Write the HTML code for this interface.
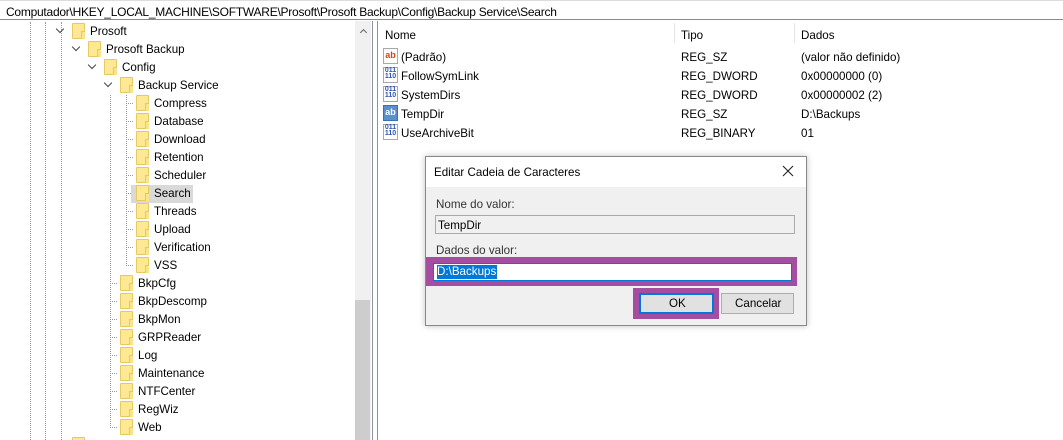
<!DOCTYPE html>
<html><head><meta charset="utf-8"><style>
*{margin:0;padding:0;box-sizing:border-box}
html,body{width:1063px;height:440px;overflow:hidden}
body{background:#fff;font-family:"Liberation Sans",sans-serif;font-size:11.6px;color:#000;position:relative}
.a{position:absolute}
.t{position:absolute;white-space:nowrap;line-height:14px;margin-top:1px}
.f{position:absolute;width:13px;height:16px;background:#fde993;border:1px solid #e8c862;border-radius:1px}
.f:after{content:"";position:absolute;right:-1px;bottom:-1px;width:3px;height:7px;border-left:1px solid #e8c862;border-top:1px solid #e8c862;background:#fbe38a}
.v{position:absolute;border-left:1px dotted #9a9a9a;width:0}
.h{position:absolute;border-top:1px dotted #9a9a9a;height:0}
.ch{position:absolute;width:6px;height:6px;border-right:1.5px solid #444;border-bottom:1.5px solid #444;transform:rotate(45deg)}
.ic{position:absolute;width:15px;height:16px;border:1px solid #a8a8a8;background:#fff;font-size:9px;font-weight:bold;line-height:12px;text-align:center}
</style></head><body>
<div class="a" style="left:0;top:0;width:1063px;height:20px;border-bottom:1px solid #8a8a8a;border-top:1px solid #ddd"></div>
<div class="t" style="left:6px;top:4px;font-size:12px;letter-spacing:-0.25px">Computador\HKEY_LOCAL_MACHINE\SOFTWARE\Prosoft\Prosoft Backup\Config\Backup Service\Search</div>

<div class="v" style="left:30px;top:22px;height:418px"></div>
<div class="v" style="left:45px;top:22px;height:418px"></div>
<div class="v" style="left:61px;top:22px;height:418px"></div>
<div class="v" style="left:110px;top:95px;height:333px"></div>
<div class="v" style="left:126px;top:95px;height:171px"></div>
<div class="h" style="left:126px;top:103px;width:7px"></div>
<div class="h" style="left:126px;top:121px;width:7px"></div>
<div class="h" style="left:126px;top:139px;width:7px"></div>
<div class="h" style="left:126px;top:157px;width:7px"></div>
<div class="h" style="left:126px;top:175px;width:7px"></div>
<div class="h" style="left:126px;top:193px;width:7px"></div>
<div class="h" style="left:126px;top:211px;width:7px"></div>
<div class="h" style="left:126px;top:229px;width:7px"></div>
<div class="h" style="left:126px;top:247px;width:7px"></div>
<div class="h" style="left:126px;top:265px;width:7px"></div>
<div class="h" style="left:110px;top:283px;width:7px"></div>
<div class="h" style="left:110px;top:301px;width:7px"></div>
<div class="h" style="left:110px;top:319px;width:7px"></div>
<div class="h" style="left:110px;top:337px;width:7px"></div>
<div class="h" style="left:110px;top:355px;width:7px"></div>
<div class="h" style="left:110px;top:373px;width:7px"></div>
<div class="h" style="left:110px;top:391px;width:7px"></div>
<div class="h" style="left:110px;top:409px;width:7px"></div>
<div class="h" style="left:110px;top:427px;width:7px"></div>

<div class="a" style="left:131px;top:185px;width:62px;height:18px;background:#d9d9d9"></div>

<div class="ch" style="left:57px;top:26px"></div>
<div class="ch" style="left:73px;top:44px"></div>
<div class="ch" style="left:89px;top:62px"></div>
<div class="ch" style="left:105px;top:80px"></div>

<div class="f" style="left:72px;top:23px"></div><div class="t" style="left:90px;top:24px">Prosoft</div>
<div class="f" style="left:88px;top:41px"></div><div class="t" style="left:106px;top:42px">Prosoft Backup</div>
<div class="f" style="left:104px;top:59px"></div><div class="t" style="left:122px;top:60px">Config</div>
<div class="f" style="left:120px;top:77px"></div><div class="t" style="left:138px;top:78px">Backup Service</div>
<div class="f" style="left:136px;top:95px"></div><div class="t" style="left:154px;top:96px">Compress</div>
<div class="f" style="left:136px;top:113px"></div><div class="t" style="left:154px;top:114px">Database</div>
<div class="f" style="left:136px;top:131px"></div><div class="t" style="left:154px;top:132px">Download</div>
<div class="f" style="left:136px;top:149px"></div><div class="t" style="left:154px;top:150px">Retention</div>
<div class="f" style="left:136px;top:167px"></div><div class="t" style="left:154px;top:168px">Scheduler</div>
<div class="f" style="left:136px;top:185px"></div><div class="t" style="left:154px;top:186px">Search</div>
<div class="f" style="left:136px;top:203px"></div><div class="t" style="left:154px;top:204px">Threads</div>
<div class="f" style="left:136px;top:221px"></div><div class="t" style="left:154px;top:222px">Upload</div>
<div class="f" style="left:136px;top:239px"></div><div class="t" style="left:154px;top:240px">Verification</div>
<div class="f" style="left:136px;top:257px"></div><div class="t" style="left:154px;top:258px">VSS</div>
<div class="f" style="left:120px;top:275px"></div><div class="t" style="left:138px;top:276px">BkpCfg</div>
<div class="f" style="left:120px;top:293px"></div><div class="t" style="left:138px;top:294px">BkpDescomp</div>
<div class="f" style="left:120px;top:311px"></div><div class="t" style="left:138px;top:312px">BkpMon</div>
<div class="f" style="left:120px;top:329px"></div><div class="t" style="left:138px;top:330px">GRPReader</div>
<div class="f" style="left:120px;top:347px"></div><div class="t" style="left:138px;top:348px">Log</div>
<div class="f" style="left:120px;top:365px"></div><div class="t" style="left:138px;top:366px">Maintenance</div>
<div class="f" style="left:120px;top:383px"></div><div class="t" style="left:138px;top:384px">NTFCenter</div>
<div class="f" style="left:120px;top:401px"></div><div class="t" style="left:138px;top:402px">RegWiz</div>
<div class="f" style="left:120px;top:419px"></div><div class="t" style="left:138px;top:420px">Web</div>
<div class="f" style="left:72px;top:437px"></div>

<div class="a" style="left:355px;top:21px;width:16px;height:419px;background:#f0f0f0"></div>
<div class="a" style="left:355px;top:300px;width:15px;height:140px;background:#cdcdcd"></div>
<div class="a" style="left:361px;top:30px;width:5px;height:5px;border-left:1.5px solid #606060;border-top:1.5px solid #606060;transform:rotate(45deg)"></div>
<div class="a" style="left:372px;top:21px;width:1px;height:419px;background:#8a93a0"></div>
<div class="a" style="left:377px;top:21px;width:1px;height:419px;background:#8a93a0"></div>

<div class="t" style="left:385px;top:28px">Nome</div>
<div class="a" style="left:674px;top:23px;width:1px;height:20px;background:#e5e5e5"></div>
<div class="t" style="left:681px;top:28px">Tipo</div>
<div class="a" style="left:794px;top:23px;width:1px;height:20px;background:#e5e5e5"></div>
<div class="t" style="left:801px;top:28px">Dados</div>

<div class="ic" style="left:383px;top:48px;color:#d8401e">ab</div><div class="t" style="left:401px;top:50px">(Padrão)</div><div class="t" style="left:681px;top:50px">REG_SZ</div><div class="t" style="left:801px;top:50px">(valor não definido)</div>
<div class="ic" style="left:383px;top:67px;color:#2a55b8;font-size:7px;line-height:6px">011<br>110</div><div class="t" style="left:401px;top:69px">FollowSymLink</div><div class="t" style="left:681px;top:69px">REG_DWORD</div><div class="t" style="left:801px;top:69px">0x00000000 (0)</div>
<div class="ic" style="left:383px;top:86px;color:#2a55b8;font-size:7px;line-height:6px">011<br>110</div><div class="t" style="left:401px;top:88px">SystemDirs</div><div class="t" style="left:681px;top:88px">REG_DWORD</div><div class="t" style="left:801px;top:88px">0x00000002 (2)</div>
<div class="ic" style="left:383px;top:105px;color:#fff;background:#5a8fd0;border-color:#3a6fb0">ab</div><div class="t" style="left:401px;top:107px">TempDir</div><div class="t" style="left:681px;top:107px">REG_SZ</div><div class="t" style="left:801px;top:107px">D:\Backups</div>
<div class="ic" style="left:383px;top:124px;color:#2a55b8;font-size:7px;line-height:6px">011<br>110</div><div class="t" style="left:401px;top:126px">UseArchiveBit</div><div class="t" style="left:681px;top:126px">REG_BINARY</div><div class="t" style="left:801px;top:126px">01</div>

<div class="a" style="left:425px;top:156px;width:382px;height:170px;border:1px solid #888;background:#f0f0f0;box-shadow:0 0 6px rgba(0,0,0,.25)"></div>
<div class="a" style="left:426px;top:157px;width:380px;height:30px;background:#fff"></div>
<div class="t" style="left:434px;top:165px">Editar Cadeia de Caracteres</div>
<svg class="a" style="left:782px;top:165px" width="12" height="12"><path d="M1 1L11 11M11 1L1 11" stroke="#222" stroke-width="1.1"/></svg>
<div class="t" style="left:436px;top:197px;color:#333">Nome do valor:</div>
<div class="a" style="left:435px;top:215px;width:360px;height:19px;border:1px solid #aaa;background:#f0f0f0"></div>
<div class="t" style="left:438px;top:218px">TempDir</div>
<div class="t" style="left:436px;top:243px;color:#333">Dados do valor:</div>
<div class="a" style="left:426px;top:257px;width:371px;height:29px;background:#a34ea0"></div>
<div class="a" style="left:433px;top:263px;width:359px;height:18px;background:#fff;border:1px solid #0078d7"></div>
<div class="a" style="left:437px;top:265px;width:60px;height:14px;background:#0078d7"></div>
<div class="t" style="left:437px;top:264px;color:#fff">D:\Backups</div>
<div class="a" style="left:633px;top:288px;width:86px;height:31px;background:#a34ea0"></div>
<div class="a" style="left:639px;top:293px;width:75px;height:21px;background:#e1e1e1;border:2px solid #0078d7"></div>
<div class="t" style="left:669px;top:296px">OK</div>
<div class="a" style="left:721px;top:293px;width:73px;height:21px;background:#e1e1e1;border:1px solid #adadad"></div>
<div class="t" style="left:735px;top:296px">Cancelar</div>
</body></html>
